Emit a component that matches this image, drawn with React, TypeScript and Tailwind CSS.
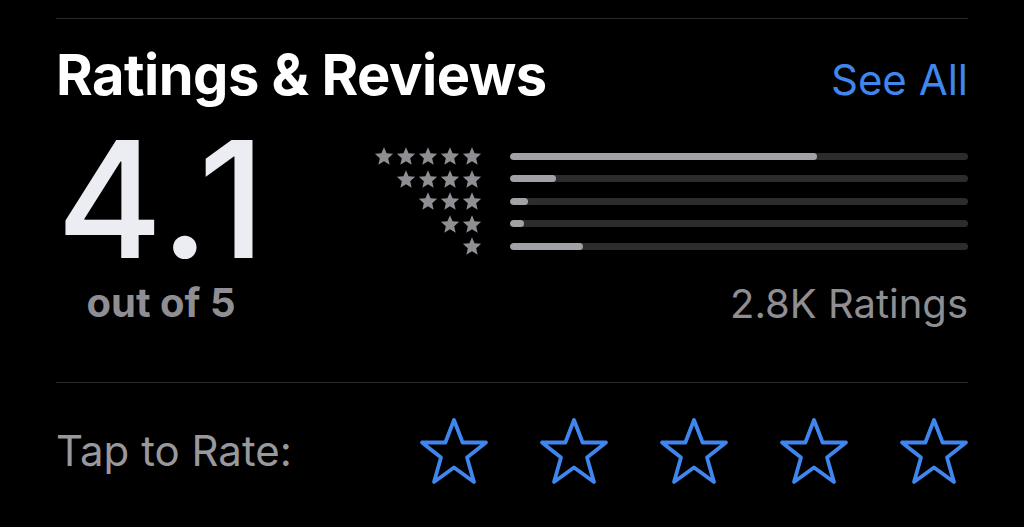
import React from "react";

const Star = ({ size, className }: { size: number; className?: string }) => (
  <svg width={size} height={size} viewBox="0 0 24 24" className={className}>
    <path d="M12 1.5l3.09 7.26 7.91.68-6 5.2 1.8 7.76L12 18.27 5.2 22.4 7 14.64l-6-5.2 7.91-.68z" fill="currentColor" />
  </svg>
);

const OutlineStar = () => (
  <svg width="74" height="74" viewBox="0 0 74 74" className="text-[#3f86ee]">
    <path
      d="M37 5 L45.6 27.5 L69 27.5 L50 42.5 L57 67 L37 52.5 L17 67 L24 42.5 L5 27.5 L28.4 27.5 Z"
      fill="none"
      stroke="currentColor"
      strokeWidth="3.8"
      strokeLinejoin="round"
    />
  </svg>
);

const rows = [
  { n: 5, pct: 67 },
  { n: 4, pct: 10 },
  { n: 3, pct: 4 },
  { n: 2, pct: 3 },
  { n: 1, pct: 16 },
];

export default function App() {
  return (
    <div className="w-[1024px] h-[527px] bg-black overflow-hidden" style={{ fontFamily: "Inter, 'Noto Sans', sans-serif" }}>
      <div className="mx-[56px] pt-[18px]">
        <div className="h-px bg-[#2a2a2c]" />
        <div className="flex items-baseline justify-between mt-[28px]">
          <div className="text-white font-bold text-[56px] leading-none tracking-[-0.5px]">Ratings &amp; Reviews</div>
          <div className="text-[#3f86ee] text-[42px] leading-none">See All</div>
        </div>
        <div className="flex">
          <div className="w-[210px] flex flex-col items-center">
            <div className="text-[#ececf3] font-medium text-[162px] leading-[150px] h-[150px] mt-[21px] tracking-[3px] pl-[3px]">4.1</div>
            <div className="text-[#8e8e93] font-bold text-[40px] leading-none mt-[9px]">out of 5</div>
          </div>
          <div className="flex-1 flex flex-col pl-[108px]">
            <div className="flex flex-col mt-[42px]">
              {rows.map((r) => (
                <div key={r.n} className="flex items-center h-[22.5px]">
                  <div className="w-[108px] flex justify-end gap-[2px] text-[#8e8e93]">
                    {Array.from({ length: r.n }).map((_, i) => (
                      <Star key={i} size={20} />
                    ))}
                  </div>
                  <div className="ml-[28px] flex-1 h-[7px] rounded-full bg-[#2c2c2e] overflow-hidden">
                    <div className="h-full rounded-full bg-[#a1a1a6]" style={{ width: `${r.pct}%` }} />
                  </div>
                </div>
              ))}
            </div>
            <div className="text-right text-[#8e8e93] text-[40px] leading-none mt-[26px]">2.8K Ratings</div>
          </div>
        </div>
        <div className="h-px bg-[#2a2a2c] mt-[58px]" />
        <div className="flex items-start justify-between mt-[32px]">
          <div className="text-[#98989d] text-[42px] leading-none mt-[15px]">Tap to Rate:</div>
          <div className="flex gap-[46px] mr-[-3px]">
            {[0, 1, 2, 3, 4].map((i) => (
              <OutlineStar key={i} />
            ))}
          </div>
        </div>
      </div>
    </div>
  );
}
